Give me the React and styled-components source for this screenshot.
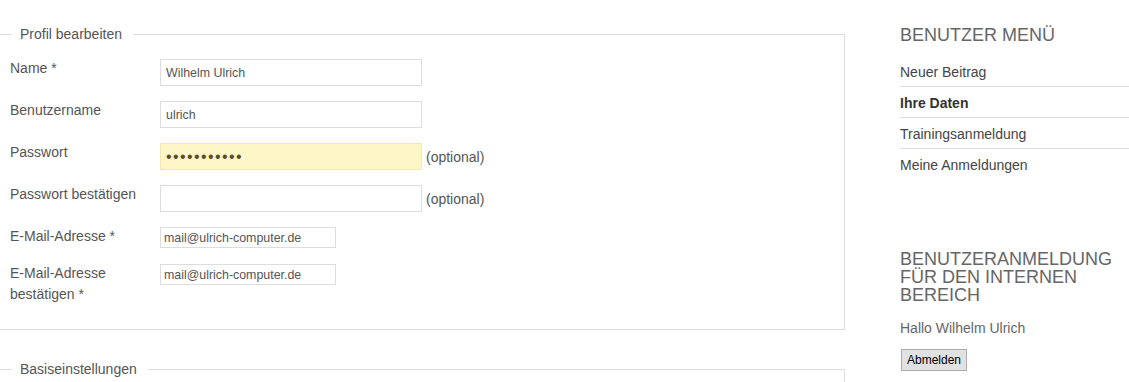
import React from "react";
import styled, { createGlobalStyle } from "styled-components";

const GlobalStyle = createGlobalStyle`
body {
  margin: 0;
  background: #fff;
  font-family: "Liberation Sans", Arial, sans-serif;
  color: #555;
}
`

const Page = styled.div`
display: flex;
align-items: flex-start;
width: 1129px;
overflow: hidden;
`

const Main = styled.div`
width: 845px;
flex-shrink: 0;
padding-top: 24px;
`

const Fieldset = styled.fieldset`
margin: 0 0 ${p => p.$gap || 0}px 0;
padding: 15px 0 24px 10px;
border: 1px solid #ddd;
border-left: none;
min-width: 0;
`

const Legend = styled.legend`
margin-left: 2px;
padding: 0 11px 0 8px;
font-size: 14px;
line-height: 20px;
color: #555;
`

const Row = styled.div`
display: flex;
align-items: flex-start;
margin-bottom: ${p => p.$mb ?? 15}px;
margin-top: ${p => p.$mt || 0}px;
`

const Label = styled.label`
width: 150px;
flex-shrink: 0;
font-size: 14px;
line-height: 21px;
color: #555;
margin-top: -1px;
`

const Field = styled.div`
display: flex;
align-items: center;
`

const Input = styled.input`
box-sizing: border-box;
width: ${p => (p.$small ? 176 : 262)}px;
height: ${p => (p.$small ? 21 : 27)}px;
padding: 0 ${p => (p.$small ? 3 : 5)}px;
margin: 0;
border: 1px solid ${p => (p.$filled ? "#f4e8b6" : "#ddd")};
background: ${p => (p.$filled ? "#fef6c7" : "#fff")};
font-family: "Liberation Sans", Arial, sans-serif;
font-size: 12.4px;
color: #555;
outline: none;
&[type="password"] {
  color: #5b4c2a;
  letter-spacing: 1.4px;
  font-size: 16px;
}
`

const Hint = styled.span`
margin-left: 4px;
font-size: 14px;
color: #555;
`

const Sidebar = styled.aside`
margin-left: 55px;
width: 229px;
flex-shrink: 0;
padding-top: 26px;
`

const Heading = styled.h3`
margin: 0;
font-size: 18px;
line-height: 18px;
font-weight: normal;
color: #666;
text-transform: uppercase;
margin-top: ${p => p.$mt || 0}px;
`

const Menu = styled.ul`
list-style: none;
margin: 12px 0 0 0;
padding: 0;
`

const MenuItem = styled.li`
padding: 7px 0 5px;
line-height: 18px;
font-size: 14px;
color: ${p => (p.$active ? "#333" : "#444")};
font-weight: ${p => (p.$active ? "bold" : "normal")};
& + & {
  border-top: 1px solid #ddd;
}
`

const Greeting = styled.p`
margin: 14px 0 11px;
font-size: 14px;
line-height: 20px;
color: #666;
`

const Button = styled.button`
height: 22px;
margin-left: 1px;
padding: 0 5px;
background: #e1e1e1;
border: 1px solid #adadad;
border-radius: 0;
font-family: "Liberation Sans", Arial, sans-serif;
font-size: 12px;
color: #000;
`

const fields = [
  { label: "Name *", value: "Wilhelm Ulrich" },
  { label: "Benutzername", value: "ulrich" },
  { label: "Passwort", value: "ulrichpass1", type: "password", filled: true, hint: true },
  { label: "Passwort bestätigen", value: "", type: "password", hint: true },
  { label: "E-Mail-Adresse *", value: "mail@ulrich-computer.de", small: true, mt: 3, mb: 16 },
  { label: "E-Mail-Adresse bestätigen *", value: "mail@ulrich-computer.de", small: true, mb: 0 },
]

const menu = ["Neuer Beitrag", "Ihre Daten", "Trainingsanmeldung", "Meine Anmeldungen"]

export default function App() {
  return (
    <>
      <GlobalStyle />
      <Page>
        <Main>
          <Fieldset $gap={29}>
            <Legend>Profil bearbeiten</Legend>
            {fields.map(f => (
              <Row key={f.label} $mt={f.mt} $mb={f.mb}>
                <Label>{f.label}</Label>
                <Field>
                  <Input
                    type={f.type || "text"}
                    defaultValue={f.value}
                    $small={f.small}
                    $filled={f.filled}
                    readOnly
                  />
                  {f.hint && <Hint>(optional)</Hint>}
                </Field>
              </Row>
            ))}
          </Fieldset>
          <Fieldset>
            <Legend>Basiseinstellungen</Legend>
          </Fieldset>
        </Main>
        <Sidebar>
          <Heading>Benutzer Menü</Heading>
          <Menu>
            {menu.map(m => (
              <MenuItem key={m} $active={m === "Ihre Daten"}>{m}</MenuItem>
            ))}
          </Menu>
          <Heading $mt={71}>Benutzeranmeldung für den internen Bereich</Heading>
          <Greeting>Hallo Wilhelm Ulrich</Greeting>
          <Button>Abmelden</Button>
        </Sidebar>
      </Page>
    </>
  )
}
